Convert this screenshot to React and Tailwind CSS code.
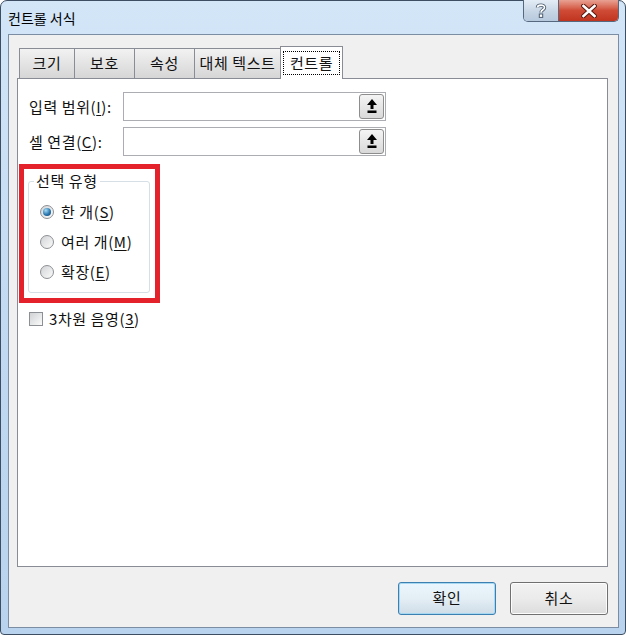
import React from "react";

const font = { fontFamily: '"Noto Sans CJK KR", "Liberation Sans", sans-serif' };

function U({ children }) {
  return <span className="underline underline-offset-2">{children}</span>;
}

function PickButton() {
  return (
    <div className="w-[25px] h-[25px] rounded-[3px] border border-[#8d8d8d] bg-gradient-to-b from-[#f4f4f4] to-[#d9d9d9] flex items-center justify-center">
      <svg width="10" height="15" viewBox="0 0 10 15">
        <polygon points="5,0 0,6 3.5,6 3.5,10 6.5,10 6.5,6 10,6" fill="#000" />
        <rect x="0.5" y="11.5" width="9" height="2.5" fill="#000" />
      </svg>
    </div>
  );
}

function Radio({ checked, children }) {
  return (
    <div className="h-[30px] flex items-center gap-[7px]">
      <span className="w-[14px] h-[14px] rounded-full border border-[#8c8f94] bg-gradient-to-br from-[#d2d4d6] to-[#fbfbfb] flex items-center justify-center">
        {checked && (
          <span className="w-[8px] h-[8px] rounded-full bg-[radial-gradient(circle_at_35%_30%,#a6dcf5,#2a78b0_55%,#123f66)]" />
        )}
      </span>
      <span>{children}</span>
    </div>
  );
}

function Tab({ w, children, active }) {
  if (active) {
    return (
      <div
        className={`${w} h-[33px] -mb-px -ml-px relative z-10 bg-white border border-b-0 border-[#898c95] flex items-center justify-center`}
      >
        <span className="px-[6px] leading-[22px] border border-dotted border-black">{children}</span>
      </div>
    );
  }
  return (
    <div
      className={`${w} h-[30px] -ml-px first:ml-0 border border-b-0 border-[#898c95] bg-gradient-to-b from-[#f2f2f2] to-[#d6d6d6] flex items-center justify-center`}
    >
      {children}
    </div>
  );
}

export default function App() {
  return (
    <div className="w-[626px] h-[635px] bg-white text-[#111] text-[15px] tracking-[0.6px]" style={font}>
      <div className="w-[626px] h-[635px] rounded-t-[7px] rounded-b-[4px] border border-[#3d4e63] bg-gradient-to-b from-[#d3e6f8] via-[#c2daf2] to-[#b9d3ee] flex flex-col">
        {/* Title bar */}
        <div className="h-[33px] flex items-start justify-between">
          <div className="pl-[7px] pt-[7px] text-[14px] tracking-normal text-black">컨트롤 서식</div>
          <div className="flex mr-[6px] -mt-px rounded-b-[5px] border border-t-0 border-[#55687e] overflow-hidden">
            <div className="w-[35px] h-[21px] bg-gradient-to-b from-[#e4edf6] via-[#c9d7e6] to-[#b6c9dd] flex items-center justify-center border-r border-[#55687e]">
              <svg width="12" height="15" viewBox="0 0 12 15">
                <path d="M2.5 4.5 C2.5 1.5 9.5 1.2 9.5 4.5 C9.5 6.8 6 6.8 6 9.5" fill="none" stroke="#4d5d70" strokeWidth="3.4" />
                <path d="M2.5 4.5 C2.5 1.5 9.5 1.2 9.5 4.5 C9.5 6.8 6 6.8 6 9.5" fill="none" stroke="#fff" strokeWidth="1.6" />
                <rect x="4.3" y="11" width="3.4" height="3.4" fill="#fff" stroke="#4d5d70" strokeWidth="1" />
              </svg>
            </div>
            <div className="w-[59px] h-[21px] bg-gradient-to-b from-[#e8a193] via-[#cf4b36] to-[#c0341e] flex items-center justify-center">
              <svg width="16" height="14" viewBox="0 0 16 14">
                <path d="M2.5 2 L13.5 12 M13.5 2 L2.5 12" stroke="#5a1a10" strokeWidth="4.6" strokeLinecap="square" />
                <path d="M2.5 2 L13.5 12 M13.5 2 L2.5 12" stroke="#fff" strokeWidth="2.6" strokeLinecap="square" />
              </svg>
            </div>
          </div>
        </div>

        {/* Client area */}
        <div className="ml-[7px] w-[611px] h-[594px] border border-[#7b8da3] bg-[#f0f0f0] flex flex-col">
          <div className="mt-[11px] h-[32px] pl-[10px] flex items-end">
            <Tab w="w-[56px]">크기</Tab>
            <Tab w="w-[61px]">보호</Tab>
            <Tab w="w-[61px]">속성</Tab>
            <Tab w="w-[87px]">대체 텍스트</Tab>
            <Tab w="w-[63px]" active>
              컨트롤
            </Tab>
          </div>

          <div className="ml-[8px] w-[591px] h-[489px] border border-[#898c95] bg-white flex flex-col">
            <div className="mt-[13px] pl-[11px] flex items-center">
              <div className="w-[94px] pt-[1px]">
                입력 범위(<U>I</U>):
              </div>
              <div className="w-[263px] h-[29px] border border-[#abadb3] flex items-center justify-end pr-[1px]">
                <PickButton />
              </div>
            </div>
            <div className="mt-[6px] pl-[11px] flex items-center">
              <div className="w-[94px] pt-[1px]">
                셀 연결(<U>C</U>):
              </div>
              <div className="w-[263px] h-[29px] border border-[#abadb3] flex items-center justify-end pr-[1px]">
                <PickButton />
              </div>
            </div>

            <div className="mt-[8px] ml-[1px] w-[141px] h-[139px] border-[5px] border-[#e3222c]">
              <div className="relative mt-[12px] ml-[4px] w-[122px] h-[112px] border border-[#d5dfe5] rounded-[3px] pt-[15px] pl-[11px]">
                <div className="absolute -top-[12px] left-[5px] bg-white px-[2px] leading-[22px]">선택 유형</div>
                <Radio checked>
                  한 개(<U>S</U>)
                </Radio>
                <Radio>
                  여러 개(<U>M</U>)
                </Radio>
                <Radio>
                  확장(<U>E</U>)
                </Radio>
              </div>
            </div>

            <div className="mt-[6px] pl-[11px] h-[20px] flex items-center gap-[6px]">
              <span className="w-[14px] h-[14px] border border-[#8c8f94] bg-gradient-to-br from-[#d0d2d4] to-[#fbfbfb]" />
              <span>
                3차원 음영(<U>3</U>)
              </span>
            </div>
          </div>

          <div className="mt-[15px] pr-[10px] flex justify-end gap-[14px]">
            <button className="w-[98px] h-[33px] rounded-[3px] border border-[#3c7fb1] bg-gradient-to-b from-[#eaf6fd] via-[#e4eef5] to-[#cfdde8] shadow-[inset_0_0_0_1px_#a6d8f2]">
              확인
            </button>
            <button className="w-[98px] h-[33px] rounded-[3px] border border-[#707070] bg-gradient-to-b from-[#f2f2f2] via-[#ebebeb] to-[#dcdcdc] shadow-[inset_0_0_0_1px_#fcfcfc]">
              취소
            </button>
          </div>
        </div>
      </div>
    </div>
  );
}
